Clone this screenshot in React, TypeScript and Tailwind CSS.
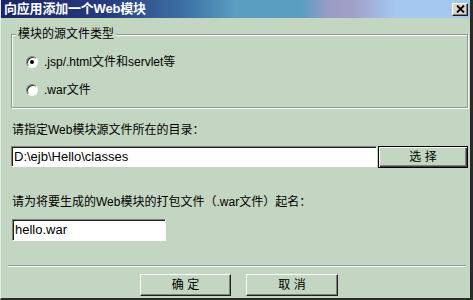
import React from "react";

const raised =
  "border border-t-white border-l-white border-b-[#202020] border-r-[#202020] shadow-[inset_-1px_-1px_0_#808080]";
const sunken =
  "border border-t-[#808080] border-l-[#808080] border-b-white border-r-white shadow-[inset_1px_1px_0_#202020] bg-white";

function Radio({ checked }: { checked?: boolean }) {
  return (
    <span
      className={`w-[12px] h-[12px] rounded-full flex items-center justify-center ${"border border-t-[#808080] border-l-[#808080] border-b-white border-r-white shadow-[inset_1px_1px_0_#303030] bg-white"}`}
    >
      {checked && <span className="w-[4px] h-[4px] rounded-full bg-black" />}
    </span>
  );
}

export default function App() {
  return (
    <div className="w-[473px] h-[300px] bg-[#c3d6c1] flex flex-col border-l border-l-[#e4ece4] border-r-[3px] border-r-[#2a2a2a] border-b-2 border-b-[#2a2a2a] overflow-hidden font-['Liberation_Sans','Noto_Sans_CJK_SC',sans-serif] text-[12px] text-black">
      {/* title bar */}
      <div className="h-[18px] shrink-0 flex items-center justify-between pl-[3px] pr-[2px] bg-[linear-gradient(to_right,#1a2468_0%,#263a7c_22%,#3f74a8_40%,#5a9ec0_50%,#5a9ec2_64%,#9c9cc8_70%,#a0a0c8_75%,#a4c8f0_84%,#a4c8f0_100%)]">
        <span className="text-white font-bold text-[13px] leading-[16px] tracking-[-0.2px]">
          向应用添加一个Web模块
        </span>
        <span className={`w-[16px] h-[13px] bg-[#d8d8d0] flex items-center justify-center ${raised}`}>
          <svg width="9" height="8" viewBox="0 0 9 8">
            <path d="M1 0.5 L8 7.5 M8 0.5 L1 7.5" stroke="#000" strokeWidth="1.8" />
          </svg>
        </span>
      </div>

      {/* body */}
      <div className="flex-1 flex flex-col pl-[10px] pr-[2px]">
        <fieldset className="mt-[9px] border border-[#8e9494] shadow-[inset_1px_1px_0_#fff,1px_1px_0_#fff] pb-[9px]">
          <legend className="ml-[4px] px-[2px] leading-[14px] bg-[#c3d6c1]">模块的源文件类型</legend>
          <div className="flex flex-col pl-[14px] pt-[13px] gap-[12px]">
            <label className="h-[16px] flex items-center gap-[6px]">
              <Radio checked />
              <span className="leading-[14px]">.jsp/.html文件和servlet等</span>
            </label>
            <label className="h-[16px] flex items-center gap-[6px]">
              <Radio />
              <span className="leading-[14px]">.war文件</span>
            </label>
          </div>
        </fieldset>

        <div className="mt-[15px] pl-[1px] leading-[14px]">请指定Web模块源文件所在的目录：</div>
        <div className="mt-[9px] flex items-start gap-[1px]">
          <div className={`w-[366px] h-[21px] flex items-center pl-[2px] text-[13px] ${sunken}`}>
            D:\ejb\Hello\classes
          </div>
          <button className="w-[90px] h-[22px] border border-black shadow-[inset_1px_1px_0_#fff,inset_-1px_-1px_0_#404040,inset_-2px_-2px_0_#808080] flex items-center justify-center leading-[14px]">
            选 择
          </button>
        </div>

        <div className="mt-[27px] pl-[1px] leading-[14px]">请为将要生成的Web模块的打包文件（.war文件）起名：</div>
        <div className={`mt-[10px] ml-[1px] w-[154px] h-[22px] flex items-center pl-[2px] text-[13px] ${sunken}`}>
          hello.war
        </div>

        <div className="mt-[24px] -ml-[3px] mr-[2px] h-0 border-t border-t-[#8e9494] border-b border-b-white" />

        <div className="mt-[7px] flex justify-center gap-[15px] pr-[1px]">
          <button className={`w-[91px] h-[22px] flex items-center justify-center leading-[14px] ${raised}`}>
            确 定
          </button>
          <button className={`w-[92px] h-[22px] flex items-center justify-center leading-[14px] ${raised}`}>
            取 消
          </button>
        </div>
      </div>
    </div>
  );
}
